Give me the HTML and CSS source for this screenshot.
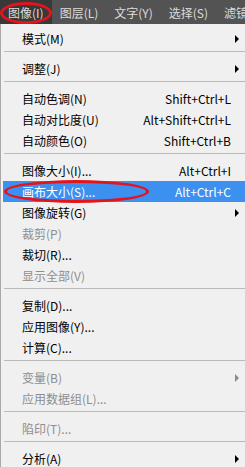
FILE: index.html
```html
<!DOCTYPE html>
<html>
<head>
  <title>图像菜单</title>
  <link rel="stylesheet" href="styles.css">
</head>
<body>
  <div class="menubar">
    <span class="bar-item active">图像(I)<span class="ring"></span></span>
    <span class="bar-item">图层(L)</span>
    <span class="bar-item">文字(Y)</span>
    <span class="bar-item">选择(S)</span>
    <span class="bar-item">滤镜</span>
  </div>

  <ul class="menu">
    <li class="item"><span class="label">模式(M)</span><span class="sub"><i class="arrow"></i></span></li>
    <li class="sep"></li>
    <li class="item"><span class="label">调整(J)</span><span class="sub"><i class="arrow"></i></span></li>
    <li class="sep"></li>
    <li class="item"><span class="label">自动色调(N)</span><span class="key">Shift+Ctrl+L</span><span class="sub"></span></li>
    <li class="item"><span class="label">自动对比度(U)</span><span class="key">Alt+Shift+Ctrl+L</span><span class="sub"></span></li>
    <li class="item"><span class="label">自动颜色(O)</span><span class="key">Shift+Ctrl+B</span><span class="sub"></span></li>
    <li class="sep"></li>
    <li class="item"><span class="label">图像大小(I)...</span><span class="key">Alt+Ctrl+I</span><span class="sub"></span></li>
    <li class="item selected"><span class="label">画布大小(S)...</span><span class="key">Alt+Ctrl+C</span><span class="sub"></span><span class="ring wide"></span></li>
    <li class="item"><span class="label">图像旋转(G)</span><span class="sub"><i class="arrow"></i></span></li>
    <li class="item disabled"><span class="label">裁剪(P)</span><span class="sub"></span></li>
    <li class="item"><span class="label">裁切(R)...</span><span class="sub"></span></li>
    <li class="item disabled"><span class="label">显示全部(V)</span><span class="sub"></span></li>
    <li class="sep"></li>
    <li class="item"><span class="label">复制(D)...</span><span class="sub"></span></li>
    <li class="item"><span class="label">应用图像(Y)...</span><span class="sub"></span></li>
    <li class="item"><span class="label">计算(C)...</span><span class="sub"></span></li>
    <li class="sep"></li>
    <li class="item disabled"><span class="label">变量(B)</span><span class="sub"><i class="arrow"></i></span></li>
    <li class="item disabled"><span class="label">应用数据组(L)...</span><span class="sub"></span></li>
    <li class="sep"></li>
    <li class="item disabled"><span class="label">陷印(T)...</span><span class="sub"></span></li>
    <li class="sep"></li>
    <li class="item"><span class="label">分析(A)</span><span class="sub"><i class="arrow"></i></span></li>
  </ul>
</body>
</html>
```

FILE: styles.css
```css
body { margin: 0; background: #f0f0f0; font-family: "Noto Sans CJK SC", "Noto Sans", sans-serif; font-size: 12px; overflow: hidden; }

.menubar { display: flex; height: 24px; background: #535353; color: #dcdcdc; white-space: nowrap; overflow: hidden; }
.bar-item { position: relative; display: flex; align-items: center; padding: 0 8px; flex: none; }
.bar-item.active { background: #383838; }

.ring { position: absolute; border: 3px solid #e3141c; border-radius: 50%; pointer-events: none; }
.bar-item .ring { left: 0; top: 2px; width: 46px; height: 16px; }
.ring.wide { left: 1px; top: -1px; width: 139px; height: 17px; }

.menu { list-style: none; margin: 0; padding: 4px 0 0 2px; border-left: 1px solid #a9a9a9; min-height: 443px; }
.item { position: relative; display: flex; align-items: center; height: 21px; padding-left: 19px; color: #000; }
.item .label { flex: 1; }
.item .key { color: #000; }
.item .sub { width: 14px; flex: none; display: flex; align-items: center; }
.item.selected { background: #3c90f0; color: #fff; }
.item.selected .key { color: #fff; }
.item.disabled { color: #8e8e8e; }

.arrow { display: block; margin-left: 4px; width: 0; height: 0; border-top: 4px solid transparent; border-bottom: 4px solid transparent; border-left: 4px solid #000; }
.disabled .arrow { border-left-color: #8a8a8a; }

.sep { height: 9px; margin-left: 1px; box-sizing: border-box; padding-top: 2px; }
.sep::before { content: ""; display: block; height: 1px; background: #b9b9b9; }
```
